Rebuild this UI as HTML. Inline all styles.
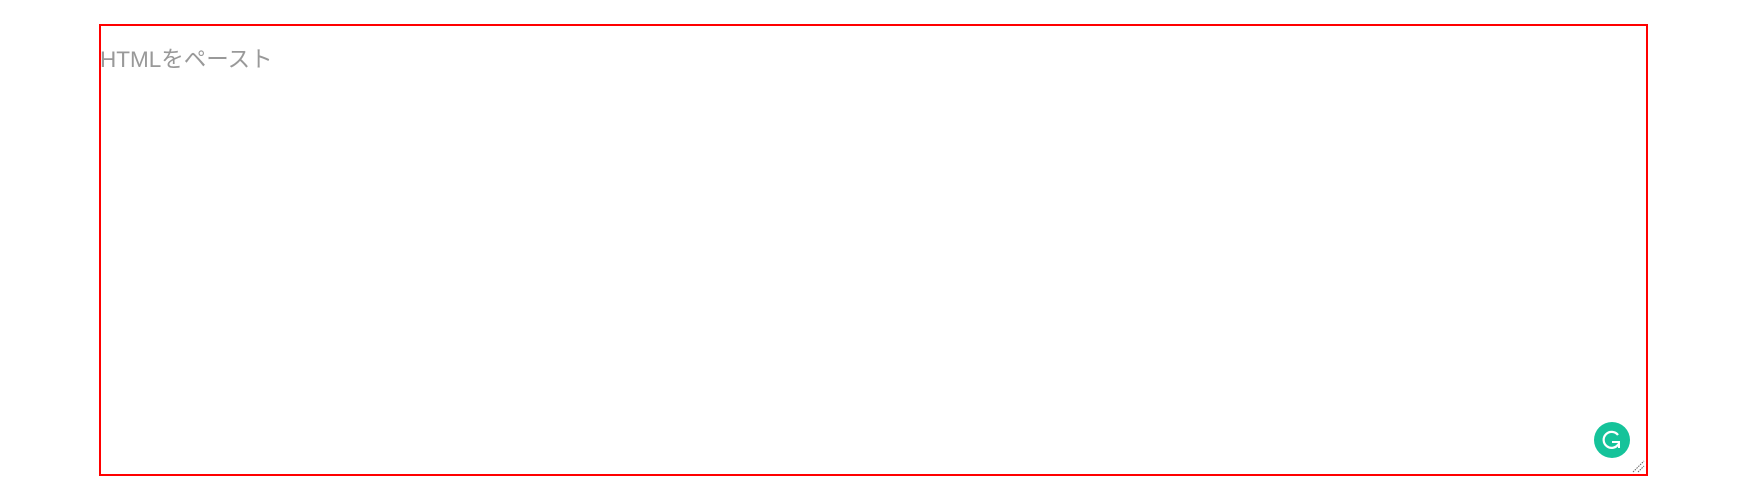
<!DOCTYPE html>
<html><head><meta charset="utf-8"><style>
html,body{margin:0;padding:0;background:#fff;width:1747px;height:500px;overflow:hidden;}
.box{position:absolute;left:99px;top:24px;width:1545px;height:448px;border:2px solid #f00;}
.ph{position:absolute;left:100px;top:42px;font-family:"Liberation Sans","Noto Sans CJK JP",sans-serif;font-size:22.5px;color:#999;}
.g{position:absolute;left:1594px;top:422px;width:36px;height:36px;border-radius:50%;background:#15c39a;}
</style></head><body>
<div class="box"></div>
<div class="ph">HTMLをペースト</div>
<div class="g"><svg width="36" height="36" viewBox="0 0 36 36"><path d="M24 13 A8 8 0 1 0 24.5 22" fill="none" stroke="#fff" stroke-width="2.2"/><path d="M18 20 H25 V26" fill="none" stroke="#fff" stroke-width="2"/></svg></div>
<svg style="position:absolute;left:1630px;top:458px" width="16" height="16"><path d="M3 14 L14 3 M8 14 L14 8" stroke="#666" stroke-width="1" stroke-dasharray="1.5 1"/></svg>
</body></html>
